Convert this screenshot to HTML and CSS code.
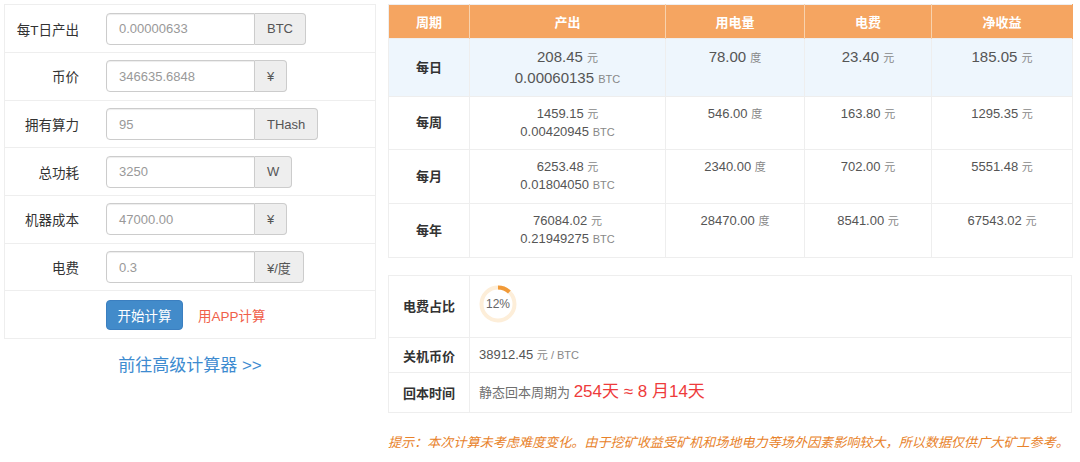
FILE: index.html
```html
<!DOCTYPE html>
<html lang="zh">
<head>
<meta charset="utf-8">
<link rel="stylesheet" href="styles.css">
</head>
<body>
<div class="page">
  <div class="left">
    <div class="form">
      <div class="row"><label>每T日产出</label><div class="group"><span class="inp">0.00000633</span><span class="addon">BTC</span></div></div>
      <div class="row"><label>币价</label><div class="group"><span class="inp">346635.6848</span><span class="addon">¥</span></div></div>
      <div class="row"><label>拥有算力</label><div class="group"><span class="inp">95</span><span class="addon">THash</span></div></div>
      <div class="row"><label>总功耗</label><div class="group"><span class="inp">3250</span><span class="addon">W</span></div></div>
      <div class="row"><label>机器成本</label><div class="group"><span class="inp">47000.00</span><span class="addon">¥</span></div></div>
      <div class="row"><label>电费</label><div class="group"><span class="inp">0.3</span><span class="addon">¥/度</span></div></div>
      <div class="row"><span></span><div class="actions"><button class="btn">开始计算</button><a class="app">用APP计算</a></div></div>
    </div>
    <a class="adv">前往高级计算器 &gt;&gt;</a>
  </div>
  <div class="right">
    <table class="result">
      <colgroup><col class="c1"><col class="c2"><col class="c3"><col class="c4"><col class="c5"></colgroup>
      <thead>
        <tr><th>周期</th><th>产出</th><th>用电量</th><th>电费</th><th>净收益</th></tr>
      </thead>
      <tbody>
        <tr class="hl">
          <td class="period">每日</td>
          <td>208.45 <small>元</small><br>0.00060135 <small>BTC</small></td>
          <td>78.00 <small>度</small></td>
          <td>23.40 <small>元</small></td>
          <td>185.05 <small>元</small></td>
        </tr>
        <tr class="r2">
          <td class="period">每周</td>
          <td>1459.15 <small>元</small><br>0.00420945 <small>BTC</small></td>
          <td>546.00 <small>度</small></td>
          <td>163.80 <small>元</small></td>
          <td>1295.35 <small>元</small></td>
        </tr>
        <tr>
          <td class="period">每月</td>
          <td>6253.48 <small>元</small><br>0.01804050 <small>BTC</small></td>
          <td>2340.00 <small>度</small></td>
          <td>702.00 <small>元</small></td>
          <td>5551.48 <small>元</small></td>
        </tr>
        <tr>
          <td class="period">每年</td>
          <td>76084.02 <small>元</small><br>0.21949275 <small>BTC</small></td>
          <td>28470.00 <small>度</small></td>
          <td>8541.00 <small>元</small></td>
          <td>67543.02 <small>元</small></td>
        </tr>
      </tbody>
    </table>

    <table class="info">
      <colgroup><col class="c1"><col></colgroup>
      <tr class="r1">
        <th>电费占比</th>
        <td>
          <div class="donut">
            <svg width="38" height="38" viewBox="0 0 38 38">
              <circle cx="19" cy="19" r="16.5" fill="none" stroke="#fdeed9" stroke-width="4"/>
              <circle cx="19" cy="19" r="16.5" fill="none" stroke="#f19a38" stroke-width="4" stroke-dasharray="12.44 103.67" transform="rotate(-90 19 19)"/>
            </svg>
            <span>12%</span>
          </div>
        </td>
      </tr>
      <tr class="r2">
        <th>关机币价</th>
        <td><span class="num">38912.45</span> <small>元 / BTC</small></td>
      </tr>
      <tr class="r3">
        <th>回本时间</th>
        <td><span class="muted">静态回本周期为</span> <span class="big">254天 ≈ 8 月14天</span></td>
      </tr>
    </table>

    <p class="tip">提示：本次计算未考虑难度变化。由于挖矿收益受矿机和场地电力等场外因素影响较大，所以数据仅供广大矿工参考。</p>
  </div>
</div>
</body>
</html>
```

FILE: styles.css
```css
* { box-sizing: border-box; }
html, body { margin: 0; padding: 0; background: #fff; }
body {
  font-family: "Liberation Sans", "Noto Sans CJK SC", sans-serif;
  font-size: 13px;
  color: #555;
}
.page {
  display: flex;
  align-items: flex-start;
  padding: 4px 8px 0 4px;
  gap: 12px;
}
.left { width: 372px; flex: none; display: flex; flex-direction: column; }
.form { border: 1px solid #eee; }
.row {
  display: grid;
  grid-template-columns: 74px auto;
  column-gap: 27px;
  align-items: center;
  height: 47.7px;
  border-top: 1px solid #eee;
}
.row:first-child { border-top: 0; height: 47px; }
.row label { text-align: right; color: #333; font-size: 13.5px; }
.group { display: flex; height: 32px; }
.inp {
  width: 149px;
  height: 32px;
  border: 1px solid #ccc;
  border-radius: 4px 0 0 4px;
  box-shadow: inset 0 1px 1px rgba(0,0,0,.075);
  padding: 0 12px;
  display: flex;
  align-items: center;
  color: #999;
  font-size: 13px;
}
.addon {
  height: 32px;
  padding: 0 12px;
  border: 1px solid #ccc;
  border-left: 0;
  border-radius: 0 4px 4px 0;
  background: #eee;
  color: #555;
  display: flex;
  align-items: center;
  font-size: 13px;
}
.actions { display: flex; align-items: center; gap: 15px; }
.btn {
  width: 77px;
  height: 30px;
  border: 1px solid #3b7fc0;
  background: #428bca;
  color: #fff;
  border-radius: 4px;
  font-family: inherit;
  font-size: 13.5px;
  padding: 0;
}
.app { color: #f0604a; font-size: 13.5px; }
.adv {
  margin-top: 17px;
  text-align: center;
  color: #3d8bd0;
  font-size: 17px;
  line-height: 20px;
}

.right { width: 684px; flex: none; }
table { border-collapse: collapse; width: 684px; table-layout: fixed; }
col.c1 { width: 81px; }
col.c2 { width: 196px; }
col.c3 { width: 139px; }
col.c4 { width: 127px; }
col.c5 { width: 141px; }
.result { border: 1px solid #eee; }
.result th {
  background: #f5a561;
  color: #fff;
  font-weight: bold;
  font-size: 13px;
  height: 34px;
  padding: 0;
  border-right: 1px solid #f8d2ad;
}
.result th:last-child { border-right: 1px solid #f5a561; }
.result td {
  text-align: center;
  vertical-align: top;
  padding: 8px 4px 0;
  line-height: 18px;
  font-size: 13px;
  color: #555;
  border: 1px solid #eee;
  height: 54px;
}
.result tr.r2 td { height: 53px; }
.result td.period {
  vertical-align: middle;
  padding-top: 0;
  font-weight: bold;
  color: #333;
  font-size: 13px;
}
.result tr.hl td { background: #eef6fd; font-size: 15px; line-height: 21px; height: 58px; padding-top: 7px; }
.result tr.hl td.period { font-size: 13px; padding-top: 0; }
small { font-size: 11px; color: #888; line-height: 0; }

.info { margin-top: 17px; border: 1px solid #eee; }
.info th, .info td { border: 1px solid #eee; }
.info th {
  font-weight: bold;
  color: #333;
  font-size: 13px;
  text-align: center;
  padding: 0;
}
.info td { padding: 0 9px; text-align: left; line-height: 18px; }
.info .r1 { height: 62px; }
.info .r1 th { padding-bottom: 3px; }
.info .r2 { height: 35px; }
.info .r3 { height: 40px; }
.donut { position: relative; width: 38px; height: 38px; margin-top: -5px; }
.donut svg { display: block; }
.donut span {
  position: absolute;
  inset: 0;
  display: flex;
  align-items: center;
  justify-content: center;
  font-size: 12px;
  color: #666;
}
.num { font-size: 13px; color: #555; }
.muted { color: #6f6f6f; font-size: 13px; }
.big { color: #ee3b3b; font-size: 17px; line-height: 0; }
.tip {
  margin: 20px 0 0;
  color: #e8822a;
  font-style: italic;
  font-size: 13.1px;
  line-height: 20px;
  white-space: nowrap;
}
```
